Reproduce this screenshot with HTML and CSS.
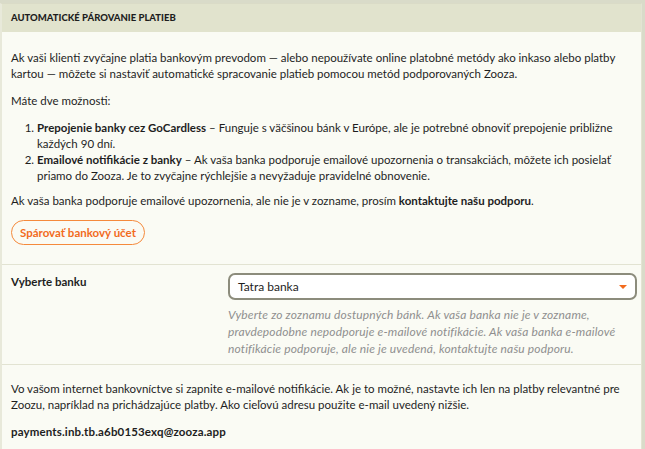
FILE: index.html
```html
<!DOCTYPE html>
<html lang="sk">
<head>
<meta charset="utf-8">
<link rel="stylesheet" href="styles.css">
</head>
<body>
<div class="card">
  <div class="card-header">Automatické párovanie platieb</div>
  <div class="section intro">
    <p>Ak vaši klienti zvyčajne platia bankovým prevodom — alebo nepoužívate online platobné metódy ako inkaso alebo platby kartou — môžete si nastaviť automatické spracovanie platieb pomocou metód podporovaných Zooza.</p>
    <p>Máte dve možnosti:</p>
    <ol>
      <li><strong>Prepojenie banky cez GoCardless</strong> – Funguje s väčšinou bánk v Európe, ale je potrebné obnoviť prepojenie približne každých 90 dní.</li>
      <li><strong>Emailové notifikácie z banky</strong> – Ak vaša banka podporuje emailové upozornenia o transakciách, môžete ich posielať priamo do Zooza. Je to zvyčajne rýchlejšie a nevyžaduje pravidelné obnovenie.</li>
    </ol>
    <p>Ak vaša banka podporuje emailové upozornenia, ale nie je v zozname, prosím <strong>kontaktujte našu podporu</strong>.</p>
    <button class="btn-outline">Spárovať bankový účet</button>
  </div>
  <div class="section form-row">
    <label class="form-label">Vyberte banku</label>
    <div class="form-field">
      <div class="select">
        <span>Tatra banka</span>
        <span class="caret"></span>
      </div>
      <p class="help">Vyberte zo zoznamu dostupných bánk. Ak vaša banka nie je v zozname, pravdepodobne nepodporuje e-mailové notifikácie. Ak vaša banka e-mailové notifikácie podporuje, ale nie je uvedená, kontaktujte našu podporu.</p>
    </div>
  </div>
  <div class="section outro">
    <p>Vo vašom internet bankovníctve si zapnite e-mailové notifikácie. Ak je to možné, nastavte ich len na platby relevantné pre Zoozu, napríklad na prichádzajúce platby. Ako cieľovú adresu použite e-mail uvedený nižšie.</p>
    <p class="email">payments.inb.tb.a6b0153exq@zooza.app</p>
  </div>
</div>
</body>
</html>
```
FILE: styles.css
```css
html, body {
  margin: 0;
  padding: 0;
}
body {
  background: #d9dbc9;
  font-family: Lato, "Open Sans", sans-serif;
  color: #1e1e1e;
  font-size: 11.5px;
  line-height: 16px;
  padding-top: 3px;
  padding-right: 3px;
  height: 449px;
  box-sizing: border-box;
  overflow: hidden;
}
.card {
  background: #fafbf4;
  border-left: 2px solid #e8e9da;
  border-right: 1px solid #e3e4d3;
  border-top: 1px solid #dadbc7;
  border-bottom: 2px solid #f7850f;
}
.card-header {
  background: #e1e3cd;
  height: 28px;
  display: flex;
  align-items: center;
  padding: 0 9px;
  font-size: 9.5px;
  font-weight: 900;
  text-transform: uppercase;
}
.section {
  padding: 0 9px;
}
.section + .section {
  border-top: 1px solid #e2e3d2;
}
.intro {
  padding-top: 18px;
  padding-bottom: 19px;
}
p {
  margin: 0 0 11px;
}
ol {
  margin: 0 0 9px;
  padding-left: 26px;
}
strong {
  font-weight: 700;
}
.btn-outline {
  display: block;
  font-family: inherit;
  font-size: 11.5px;
  font-weight: 700;
  color: #f26b1d;
  background: transparent;
  border: 1px solid #f58a3c;
  border-radius: 13px;
  height: 25px;
  padding: 0 8px;
  margin-top: 11px;
}
.form-row {
  display: flex;
  padding-top: 8px;
  padding-bottom: 7px;
  padding-right: 4px;
}
.form-label {
  width: 217px;
  font-weight: 700;
  padding-top: 1px;
}
.form-field {
  flex: 1;
}
.select {
  height: 27px;
  box-sizing: border-box;
  border: 2px solid #8c8c7c;
  border-radius: 7px;
  background: #fff;
  display: flex;
  align-items: center;
  justify-content: space-between;
  padding: 0 8px;
  font-size: 12px;
}
.caret {
  width: 0;
  height: 0;
  border-left: 4px solid transparent;
  border-right: 4px solid transparent;
  border-top: 4px solid #f26b1d;
}
.help {
  margin: 6px 0 0;
  font-size: 12px;
  letter-spacing: 0.15px;
  line-height: 17px;
  font-style: italic;
  color: #8f8f8f;
}
.outro {
  padding-top: 16px;
  padding-bottom: 8px;
}
.outro p {
  margin-bottom: 11px;
}
.email {
  font-weight: 700;
  letter-spacing: 0.15px;
}
```
